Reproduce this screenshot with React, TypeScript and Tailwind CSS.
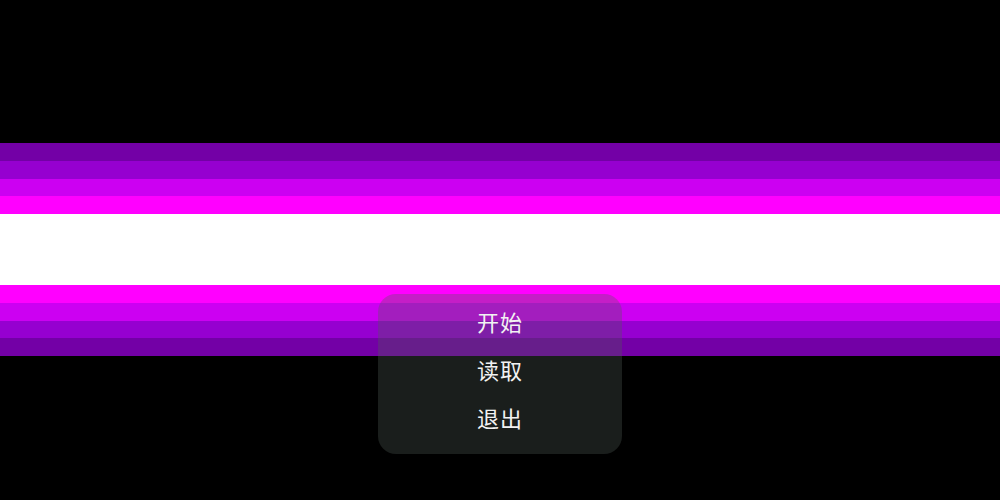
import React from 'react';

const stripes = [
  { color: 'bg-[#7300a6]', grow: 'row-span-1' },
  { color: 'bg-[#9600d0]', grow: 'row-span-1' },
  { color: 'bg-[#cc00f2]', grow: 'row-span-1' },
  { color: 'bg-[#ff00ff]', grow: 'row-span-1' },
  { color: 'bg-white', grow: 'row-span-4' },
  { color: 'bg-[#ff00ff]', grow: 'row-span-1' },
  { color: 'bg-[#cc00f2]', grow: 'row-span-1' },
  { color: 'bg-[#9600d0]', grow: 'row-span-1' },
  { color: 'bg-[#7300a6]', grow: 'row-span-1' },
];

const menuItems = ['开始', '读取', '退出'];

const App: React.FC = () => {
  return (
    <div className="relative w-[1000px] h-[500px] bg-black overflow-hidden">
      <div className="pt-[143px]">
        <div className="grid grid-rows-12 h-[213px]">
          {stripes.map((s, i) => (
            <div key={i} className={`${s.color} ${s.grow}`} />
          ))}
        </div>
      </div>

      {/* title menu */}
      <div className="absolute left-[378px] top-[294px] w-[244px] h-[160px] rounded-[18px] bg-[rgba(80,90,85,0.33)] pt-[3px] pb-[13px] flex flex-col">
        {menuItems.map((item) => (
          <button
            key={item}
            className="h-[48px] flex items-center justify-center text-[22px] text-[#f2f2f2] font-['Noto_Sans_CJK_SC',sans-serif] tracking-[1px]"
          >
            {item}
          </button>
        ))}
      </div>
    </div>
  );
};

export default App;
